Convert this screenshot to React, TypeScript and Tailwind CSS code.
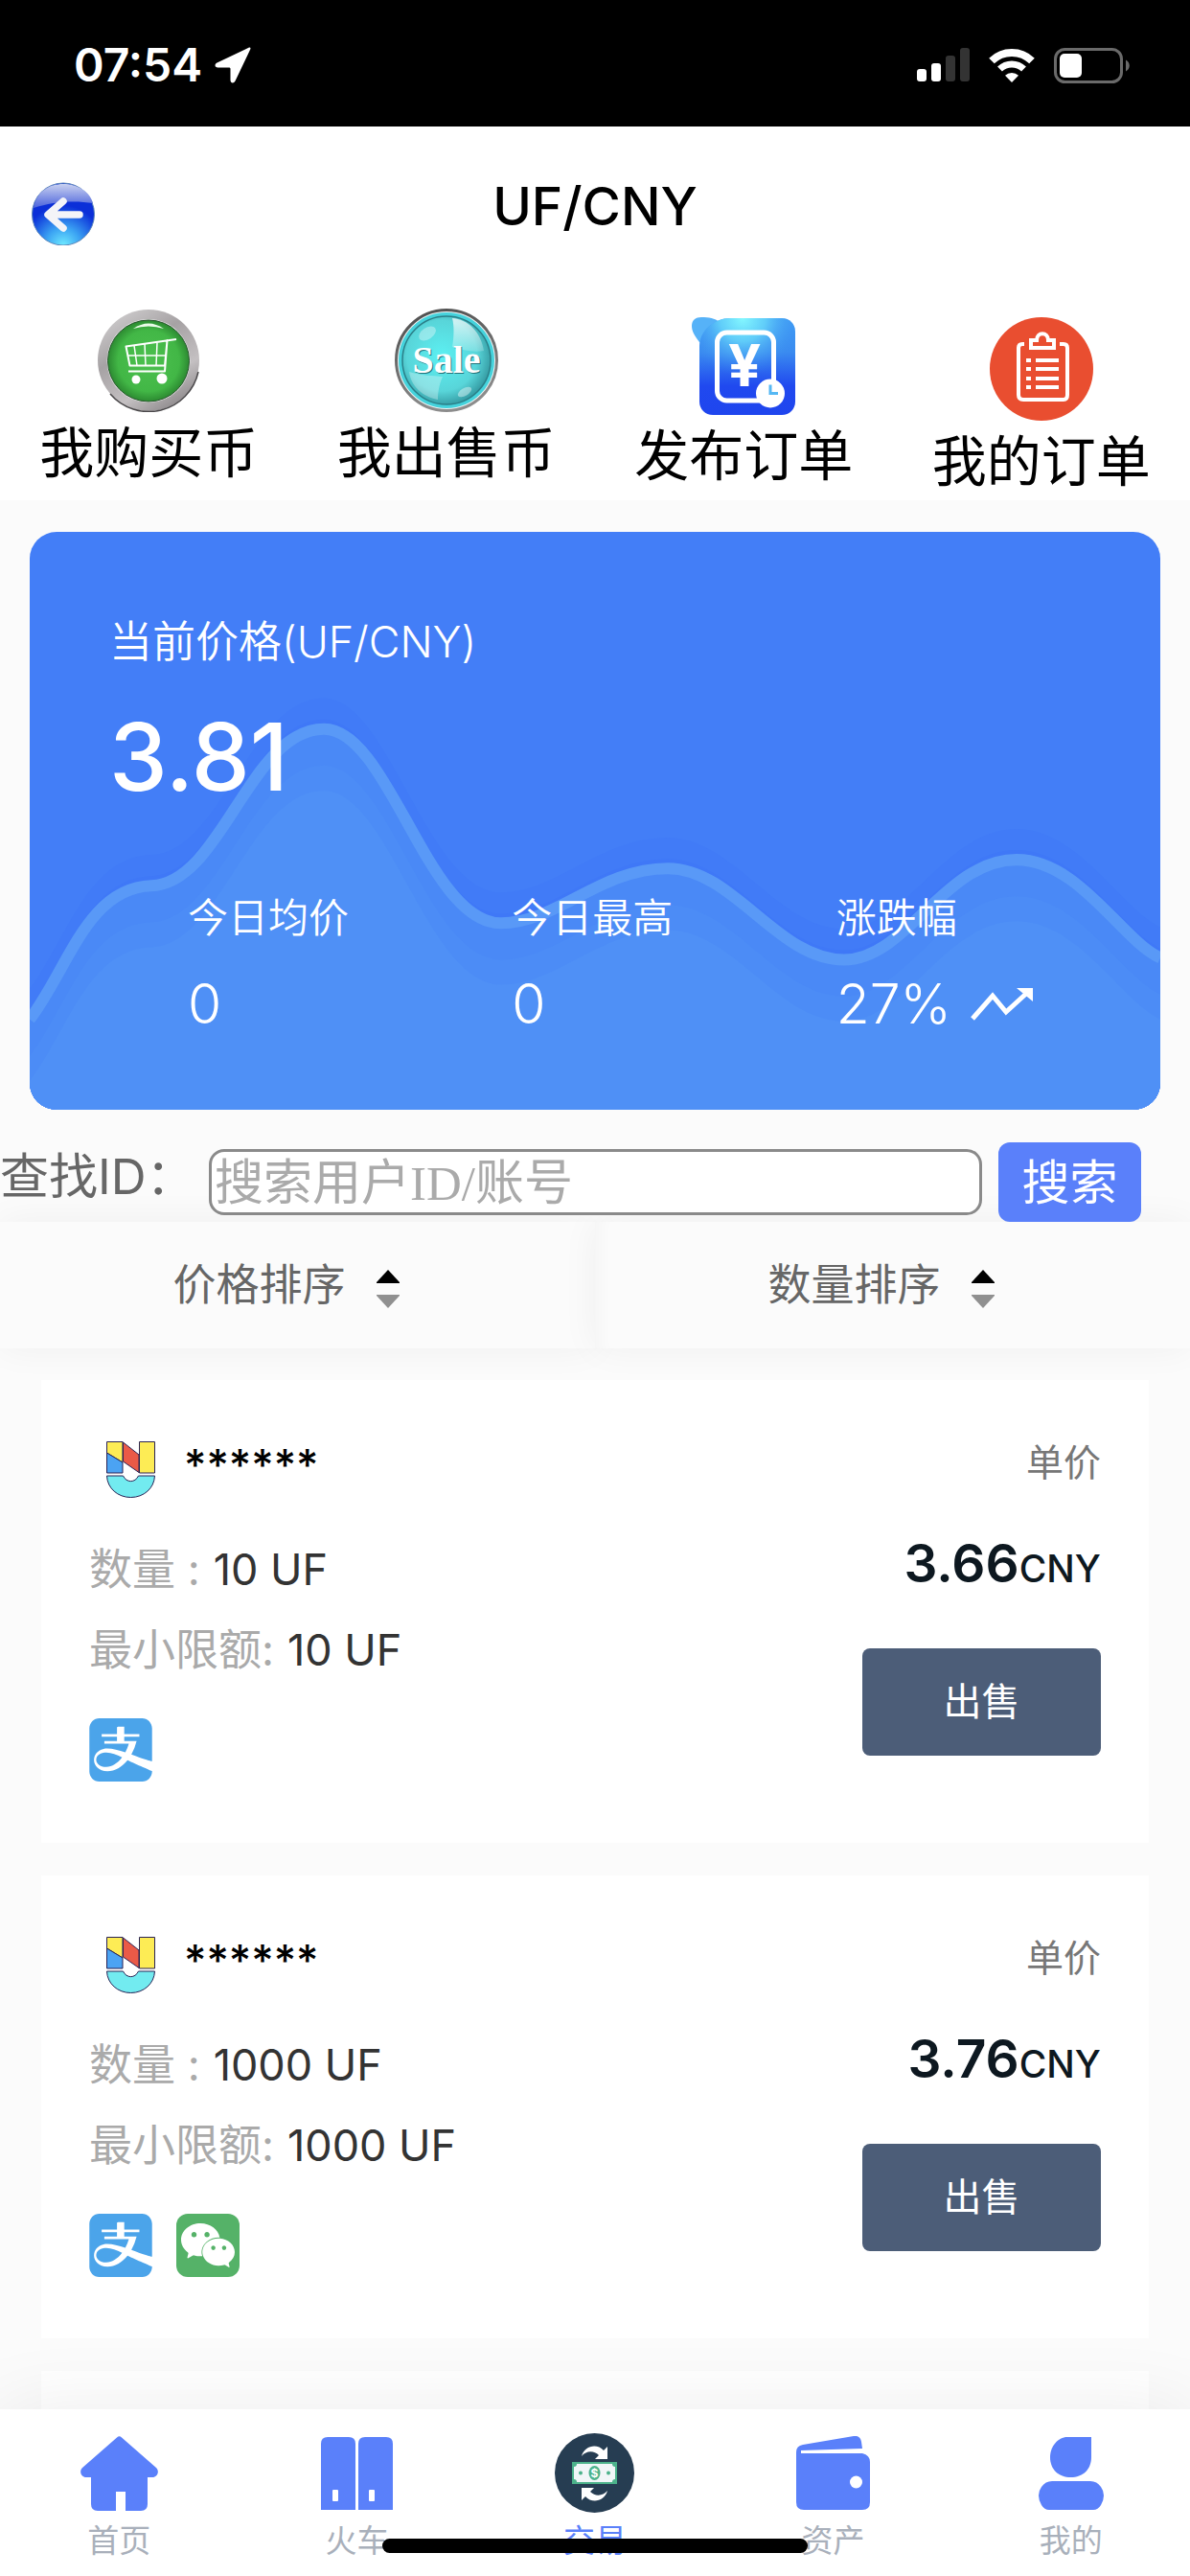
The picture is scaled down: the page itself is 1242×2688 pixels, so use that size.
import { useState } from "react";
import type { ReactNode } from "react";
import { SiAlipay, SiWechat } from "react-icons/si";

type PayMethod = "alipay" | "wechat";

type Order = {
  id: number;
  name: string;
  amount: string;
  limit: string;
  price: string;
  pay: PayMethod[];
};

const orders: Order[] = [
  { id: 1, name: "******", amount: "10 UF", limit: "10 UF", price: "3.66", pay: ["alipay"] },
  { id: 2, name: "******", amount: "1000 UF", limit: "1000 UF", price: "3.76", pay: ["alipay", "wechat"] },
];

const wave =
  "M0 507C40 455 60 370 127 368C200 366 230 205 307 205C375 205 415 407 492 407C550 407 595 350 666 350C735 350 780 445 850 445C915 445 955 341 1030 341C1095 341 1140 425 1180 443";

function StatusBar() {
  return (
    <div className="flex h-[132px] shrink-0 items-center justify-between bg-black pt-1 pr-[63px] pl-[77px] text-white">
      <div className="flex items-center gap-[13px]">
        <span className="text-[48px] leading-[60px] font-semibold">07:54</span>
        <svg width="38" height="38" viewBox="0 0 38 38" fill="#fff">
          <path d="M35.500 0.800L2.500 16.500C-0.500 18 0 21.500 3.500 21.500H15C16 21.500 16.500 22 16.500 23V34.500C16.500 38 20 38.500 21.500 35.500L37.200 2.500C38 1 37 0 35.500 0.800Z" />
        </svg>
      </div>
      <div className="flex items-center gap-5">
        <svg width="55" height="36" viewBox="0 0 55 36">
          <rect x="0" y="22" width="10" height="13" rx="3" fill="#fff" />
          <rect x="15" y="16" width="10" height="19" rx="3" fill="#fff" />
          <rect x="30" y="8" width="10" height="27" rx="3" fill="#333" />
          <rect x="45" y="0" width="10" height="35" rx="3" fill="#333" />
        </svg>
        <svg width="48" height="36" viewBox="0 0 48 36" fill="none" stroke="#fff">
          <path d="M3 13.500A30 30 0 0 1 45 13.500" strokeWidth="8" />
          <path d="M11.500 22A18 18 0 0 1 36.500 22" strokeWidth="7" />
          <path d="M24 36L17 28.800A10 10 0 0 1 31 28.800Z" fill="#fff" stroke="none" />
        </svg>
        <svg width="79" height="37" viewBox="0 0 79 37">
          <rect x="1.500" y="1.500" width="69" height="34" rx="10" fill="none" stroke="#6a6a6a" strokeWidth="3" />
          <rect x="6" y="6" width="23" height="25" rx="5" fill="#fff" />
          <path d="M75 12.500V24.500C80 22 80 15 75 12.500Z" fill="#6a6a6a" />
        </svg>
      </div>
    </div>
  );
}

function BackIcon() {
  return (
    <svg width="66" height="66" viewBox="0 0 66 66">
      <defs>
        <radialGradient id="backBody" cx="0.5" cy="1" r="0.8">
          <stop offset="0" stopColor="#6feaff" />
          <stop offset="0.35" stopColor="#3ba3f3" />
          <stop offset="0.8" stopColor="#0b2fd8" />
          <stop offset="1" stopColor="#0b2fd8" />
        </radialGradient>
        <linearGradient id="backShine" x1="0" y1="0" x2="0" y2="1">
          <stop offset="0" stopColor="#c9d1f0" />
          <stop offset="1" stopColor="#4a62dc" />
        </linearGradient>
      </defs>
      <circle cx="33" cy="33.500" r="32.500" fill="url(#backBody)" stroke="#5d86b8" strokeWidth="1" />
      <path d="M2 27C5 10 18 2 33 2C48 2 61 10 64 22C46 19 22 20 2 27Z" fill="url(#backShine)" />
      <path d="M33 20L17 34L33 48M18 34H50" fill="none" stroke="#f3f4f8" strokeWidth="7.500" strokeLinecap="round" strokeLinejoin="round" />
    </svg>
  );
}

function BuyIcon() {
  return (
    <svg width="108" height="108" viewBox="0 0 108 108">
      <defs>
        <linearGradient id="buyRing" x1="0.2" y1="0" x2="0.8" y2="1">
          <stop offset="0" stopColor="#cfcdce" />
          <stop offset="0.35" stopColor="#a6a2a4" />
          <stop offset="0.7" stopColor="#c4c0c2" />
          <stop offset="1" stopColor="#858183" />
        </linearGradient>
        <radialGradient id="buyGreen" cx="0.5" cy="0.5" r="0.5">
          <stop offset="0" stopColor="#4cc04f" />
          <stop offset="0.75" stopColor="#42b746" />
          <stop offset="1" stopColor="#2c8a31" />
        </radialGradient>
      </defs>
      <circle cx="54" cy="54" r="53" fill="url(#buyRing)" />
      <path d="M14 89A53 53 0 0 0 106 66" fill="none" stroke="#4a484a" strokeWidth="1.500" />
      <circle cx="54" cy="54.500" r="43.500" fill="#e8e6e8" />
      <circle cx="54" cy="54.500" r="42.500" fill="url(#buyGreen)" stroke="#25552a" strokeWidth="1" />
      <path d="M38 21Q54 10 70 21Q54 16 38 21Z" fill="#eafbe9" />
      <g fill="none" stroke="#fff" strokeWidth="2">
        <path d="M83 32L30.500 39.500L34.500 59.500H71L73.500 33L71 65.500H33" strokeLinejoin="round" />
        <path d="M32 49H72M39 38.500L42 59.500M50 37L51 59.500M63 35.500L62 59.500" strokeWidth="1.500" />
      </g>
      <circle cx="41" cy="74" r="4.500" fill="#fff" />
      <circle cx="68" cy="73" r="5.500" fill="#fff" />
    </svg>
  );
}

function SaleIcon() {
  return (
    <svg width="108" height="108" viewBox="0 0 108 108">
      <defs>
        <radialGradient id="saleBody" cx="0.45" cy="0.45" r="0.55">
          <stop offset="0" stopColor="#5cf0f2" />
          <stop offset="0.7" stopColor="#58d5d9" />
          <stop offset="1" stopColor="#349aa2" />
        </radialGradient>
        <linearGradient id="saleShine" x1="0" y1="0" x2="0" y2="1">
          <stop offset="0" stopColor="#ffffff" stopOpacity="0.75" />
          <stop offset="1" stopColor="#ffffff" stopOpacity="0.2" />
        </linearGradient>
        <linearGradient id="saleRing" x1="0" y1="0" x2="0.3" y2="1">
          <stop offset="0" stopColor="#4b4b4b" />
          <stop offset="1" stopColor="#8c8c8c" />
        </linearGradient>
      </defs>
      <circle cx="54" cy="54" r="52.500" fill="#f2f2f2" stroke="url(#saleRing)" strokeWidth="3" />
      <circle cx="54" cy="54" r="48" fill="url(#saleBody)" stroke="#45d3dc" strokeWidth="4" />
      <circle cx="54" cy="54" r="46" fill="none" stroke="#2b7f88" strokeWidth="1.500" />
      <path d="M60 40C62 28 62 18 60 10C76 11 90 24 93 44C82 46 70 43 60 40Z" fill="url(#saleShine)" />
      <path d="M15 66C28 70 40 70 50 71C46 80 45 88 45 95C29 92 17 81 15 66Z" fill="#fff" opacity="0.3" />
      <ellipse cx="34" cy="26" rx="10" ry="6" fill="#fff" opacity="0.35" transform="rotate(-35 34 26)" />
      <ellipse cx="73" cy="87" rx="8" ry="4" fill="#fff" opacity="0.4" transform="rotate(-30 73 87)" />
      <g fontSize="40" fontWeight="700" textAnchor="middle" className="font-['Liberation_Serif',serif]">
        <text x="55" y="68" fill="#22757c">Sale</text>
        <text x="54" y="67" fill="#fff">Sale</text>
      </g>
    </svg>
  );
}

function PublishIcon() {
  return (
    <svg width="108" height="102" viewBox="0 0 108 102">
      <defs>
        <linearGradient id="pubBody" x1="0" y1="0" x2="0" y2="1">
          <stop offset="0" stopColor="#3f9cf5" />
          <stop offset="0.35" stopColor="#3a8bf0" />
          <stop offset="0.7" stopColor="#2049ef" />
          <stop offset="1" stopColor="#1f45ee" />
        </linearGradient>
        <radialGradient id="pubGlow" cx="0.45" cy="0" r="0.6">
          <stop offset="0" stopColor="#84f8ff" />
          <stop offset="0.4" stopColor="#66d6fa" stopOpacity="0.85" />
          <stop offset="1" stopColor="#3a8bf0" stopOpacity="0" />
        </radialGradient>
      </defs>
      <path d="M8 26C2 18 0 14 0 9C0 3 4 0 10 0C18 0 24 1 29 5L20 30Z" fill="#56b2f8" />
      <path d="M8 30C8 14 24 1 40 1H94C102 1 108 7 108 15V88C108 96 102 102 94 102H22C14 102 8 96 8 88Z" fill="url(#pubBody)" />
      <path d="M8 30C8 14 24 1 40 1H94C102 1 108 7 108 15V88C108 96 102 102 94 102H22C14 102 8 96 8 88Z" fill="url(#pubGlow)" />
      <rect x="26.500" y="16" width="59" height="71" rx="10" fill="none" stroke="#fff" strokeWidth="5" />
      <text x="55" y="72" fontSize="60" fontWeight="700" textAnchor="middle" fill="#fff">¥</text>
      <circle cx="82" cy="79.500" r="15" fill="#fff" />
      <path d="M82 70.500V79.500H90" fill="none" stroke="#55b8f4" strokeWidth="3" />
    </svg>
  );
}

function OrdersIcon() {
  return (
    <svg width="108" height="108" viewBox="0 0 108 108">
      <circle cx="54" cy="54" r="54" fill="#e94e30" />
      <g fill="none" stroke="#fff" strokeWidth="4">
        <path d="M36 28H34Q30 28 30 32V81Q30 86 35 86H77Q81 86 81 81V32Q81 28 77 28H73" />
        <path d="M43 32V24H49C49 15 61 15 61 24H67V32Z" />
      </g>
      <g fill="#fff">
        {[43, 52, 62, 71].map((y) => (
          <g key={y}>
            <rect x="38" y={y} width="5" height="4" />
            <rect x="48" y={y} width="24" height="4" />
          </g>
        ))}
      </g>
    </svg>
  );
}

function CoinLogo() {
  return (
    <svg width="51" height="59" viewBox="0 0 51 59" stroke="#2a2355" strokeWidth="1">
      <path d="M0.500 0.500H17V22L0.500 12Z" fill="#fdec55" />
      <path d="M0.500 12L17 22V33H0.500Z" fill="#4ba3f3" />
      <path d="M17.500 1L34 14V32.500L17.500 21Z" fill="#ea5a47" />
      <path d="M34.500 0.500H50.500V33H34.500Z" fill="#fdec55" />
      <path d="M0.500 36H17.500C21 43.500 30 43.500 33.500 36H50.500C50 49 39 58.500 25.500 58.500C12 58.500 1 49 0.500 36Z" fill="#72ebf0" />
    </svg>
  );
}

function HomeIcon() {
  return (
    <svg width="81" height="78" viewBox="0 0 81 78" fill="#5a80fa">
      <path d="M38 1.500Q40.500 -1 43 1.500L79 33C83 37 80 43 75 43H70V71Q70 78 63 78H47V58H37V78H18Q11 78 11 71V43H6C1 43 -2 37 2 33Z" />
    </svg>
  );
}

function TrainIcon() {
  return (
    <svg width="75" height="76" viewBox="0 0 75 76">
      <path d="M0 76V7Q0 0 7 0H29Q36 0 36 7V76ZM39 76V7Q39 0 46 0H68Q75 0 75 7V76Z" fill="#5a80fa" />
      <rect x="12" y="55" width="6" height="12" rx="1" fill="#fff" />
      <rect x="50" y="55" width="6" height="12" rx="1" fill="#fff" />
    </svg>
  );
}

function TradeIcon() {
  return (
    <svg width="83" height="83" viewBox="0 0 83 83">
      <circle cx="41.500" cy="41.500" r="41.500" fill="#263d52" />
      <path d="M28 24C31 13 44 10 51 18L55 14V27H42L46 23C41 18 33 18 28 24Z" fill="#fff" />
      <path d="M55 60C52 71 39 74 32 66L28 70V57H41L37 61C42 66 50 66 55 60Z" fill="#fff" />
      <rect x="18" y="30" width="47" height="23" fill="#4cb28b" />
      <path d="M23 32H60Q60 35 63 35V48Q60 48 60 51H23Q23 48 20 48V35Q23 35 23 32Z" fill="#f1f6f8" />
      <ellipse cx="41.500" cy="41.500" rx="6" ry="7.500" fill="#4cb28b" />
      <circle cx="27" cy="41.500" r="2" fill="#4cb28b" />
      <circle cx="56" cy="41.500" r="2" fill="#4cb28b" />
      <text x="41.500" y="46" fontSize="12" fontWeight="700" textAnchor="middle" fill="#fff">$</text>
    </svg>
  );
}

function WalletIcon() {
  return (
    <svg width="77" height="77" viewBox="0 0 77 77">
      <path d="M0 17Q0 10 7 9L60 0Q67 -1 68 6L69 13L5 15V18H69Q77 20 77 27V69Q77 77 69 77H8Q0 77 0 69Z" fill="#5a80fa" />
      <circle cx="62.500" cy="48" r="6.500" fill="#fff" />
    </svg>
  );
}

function UserIcon() {
  return (
    <svg width="68" height="76" viewBox="0 0 68 76" fill="#5a80fa">
      <path d="M30 0H55V21C55 34 46 42 33.500 42C21 42 12 34 12 21C12 10 20 0 30 0Z" />
      <path d="M14 46H54Q61 46 65 52Q68 56 68 61Q68 66 65 71Q62 76 57 76H11Q6 76 3 71Q0 66 0 61Q0 56 3 52Q7 46 14 46Z" />
    </svg>
  );
}

const menus: { label: string; icon: ReactNode; low?: boolean }[] = [
  { label: "我购买币", icon: <BuyIcon /> },
  { label: "我出售币", icon: <SaleIcon /> },
  { label: "发布订单", icon: <PublishIcon />, low: true },
  { label: "我的订单", icon: <OrdersIcon />, low: true },
];

const tabs = [
  { label: "首页", icon: <HomeIcon /> },
  { label: "火车", icon: <TrainIcon /> },
  { label: "交易", icon: <TradeIcon /> },
  { label: "资产", icon: <WalletIcon /> },
  { label: "我的", icon: <UserIcon /> },
];

const stats = [
  { label: "今日均价", value: "0" },
  { label: "今日最高", value: "0" },
  { label: "涨跌幅", value: "27%", up: true },
];

function PriceCard() {
  return (
    <section className="relative mx-[31px] mt-[33px] overflow-hidden rounded-[28px] bg-[#437ef7] pt-[85px] pb-20 pl-[83px] text-white">
      <svg className="absolute inset-0 h-full w-full" viewBox="0 0 1180 601" preserveAspectRatio="none">
        <path d={`${wave}V633H0Z`} transform="translate(0 -32)" fill="#417bf7" />
        <path d={`${wave}V611H0Z`} transform="translate(0 -10)" fill="#3f78f7" />
        <path d={`${wave}V601H0Z`} fill="#4a89f6" />
        <path d={`${wave}V601H0Z`} transform="translate(0 38)" fill="#4c8cf6" />
        <path d={`${wave}V601H0Z`} transform="translate(0 64)" fill="#4f90f6" />
        <path d={wave} fill="none" stroke="#5999f7" strokeWidth="12" />
      </svg>
      <div className="relative">
        <h2 className="text-[45px] leading-[60px] font-[350]">当前价格(UF/CNY)</h2>
        <p className="mt-10 text-[97px] leading-[100px] font-medium">3.81</p>
        <dl className="mt-[94px] grid grid-cols-3 pl-[82px]">
          {stats.map((s) => (
            <div key={s.label} className="flex flex-col gap-9">
              <dt className="text-[42px] leading-[48px] font-[350]">{s.label}</dt>
              <dd className="flex items-center gap-5 text-[57px] leading-[60px] font-[350]">
                {s.value}
                {s.up && (
                  <svg width="66" height="36" viewBox="0 0 66 36" fill="none" stroke="#fff" strokeWidth="5">
                    <path d="M2 33L23 9L37 26L60 5" />
                    <path d="M48 1H65V15Z" fill="#fff" stroke="none" />
                  </svg>
                )}
              </dd>
            </div>
          ))}
        </dl>
      </div>
    </section>
  );
}

function SortButton({ label }: { label: string }) {
  return (
    <button className="flex h-[132px] items-center justify-center gap-8 bg-[#fbfbfb] pr-6 shadow-[0_0_36px_rgba(0,0,0,0.05)] last:shadow-[0_0_36px_rgba(0,0,0,0.05),inset_18px_0_18px_-14px_rgba(0,0,0,0.03)]">
      <span className="text-[45px] leading-[60px] text-[#666]">{label}</span>
      <svg width="24" height="40" viewBox="0 0 24 40" className="mt-2">
        <path d="M12 0L24 13V14H0V13Z" fill="#000" />
        <path d="M12 40L24 27V26H0V27Z" fill="#909090" />
      </svg>
    </button>
  );
}

function PayIcon({ type }: { type: PayMethod }) {
  if (type === "alipay") {
    return <SiAlipay className="size-[66px] text-[#4ba4ea]" title="支付宝" />;
  }
  return (
    <span className="flex size-[66px] items-center justify-center rounded-xl bg-[#55b268]">
      <SiWechat className="size-14 text-white" title="微信" />
    </span>
  );
}

function OrderCard({ order }: { order: Order }) {
  return (
    <li className="flex justify-between bg-white px-[50px] py-16">
      <div>
        <div className="flex gap-[30px] pl-[18px]">
          <CoinLogo />
          <span className="text-[45px] leading-[50px] font-medium text-black">{order.name}</span>
        </div>
        <dl className="mt-[33px] text-[45px] leading-[84px]">
          <div className="flex gap-[14px]">
            <dt className="text-[#aaa]">数量 :</dt>
            <dd className="text-[#333]">{order.amount}</dd>
          </div>
          <div className="flex gap-[14px]">
            <dt className="text-[#aaa]">最小限额:</dt>
            <dd className="text-[#333]">{order.limit}</dd>
          </div>
        </dl>
        <div className="mt-[29px] flex gap-[25px]">
          {order.pay.map((p) => (
            <PayIcon key={p} type={p} />
          ))}
        </div>
      </div>
      <div className="flex flex-col items-end">
        <span className="text-[39px] leading-[44px] text-[#777]">单价</span>
        <p className="mt-[53px] text-[55px] leading-[60px] font-semibold text-[#0d1820]">
          {order.price}
          <span className="text-[39px] font-medium">CNY</span>
        </p>
        <button className="mt-[53px] h-28 w-[249px] rounded-lg bg-[#4c5d78] text-[40px] text-white">出售</button>
      </div>
    </li>
  );
}

export default function App() {
  const [keyword, setKeyword] = useState("");
  const [tab, setTab] = useState("交易");

  return (
    <div className="flex h-screen flex-col overflow-hidden bg-[#fbfbfb] font-['Inter','Noto_Sans_CJK_SC',sans-serif]">
      <StatusBar />

      <header className="grid h-[172px] shrink-0 grid-cols-3 items-center bg-white px-[33px] pb-1.5">
        <button aria-label="返回" className="justify-self-start pt-4">
          <BackIcon />
        </button>
        <h1 className="text-center text-[55px] leading-[60px] font-medium text-black">UF/CNY</h1>
      </header>

      <nav className="grid shrink-0 grid-cols-4 items-start bg-white pt-[18px] pb-2">
        {menus.map((m) => (
          <a
            key={m.label}
            href="#"
            className={`flex flex-col items-center gap-[11px] text-[57px] leading-[64px] text-black ${m.low ? "pt-[9px]" : ""}`}
          >
            {m.icon}
            {m.label}
          </a>
        ))}
      </nav>

      <main className="flex-1 overflow-hidden">
        <PriceCard />

        <form className="relative z-10 mt-[34px] flex items-center pr-[51px]" onSubmit={(e) => e.preventDefault()}>
          <label htmlFor="search" className="w-[218px] self-start text-[51px] leading-[71px] whitespace-nowrap text-[#666]">
            查找ID：
          </label>
          <input
            id="search"
            value={keyword}
            onChange={(e) => setKeyword(e.target.value)}
            placeholder="搜索用户ID/账号"
            className="h-[69px] min-w-0 flex-1 rounded-2xl border-[3px] border-[#8a8a8a] bg-white px-[3px] pt-1 font-['Liberation_Serif','Noto_Sans_CJK_SC',serif] text-[51px] placeholder:text-[#aaa]"
          />
          <button className="ml-[17px] h-[83px] w-[149px] rounded-xl bg-[#5a80fa] text-[50px] leading-[60px] text-white">
            搜索
          </button>
        </form>

        <div className="grid grid-cols-2">
          <SortButton label="价格排序" />
          <SortButton label="数量排序" />
        </div>

        <ul className="relative mx-[43px] mt-[33px] flex flex-col gap-[34px]">
          {orders.map((o) => (
            <OrderCard key={o.id} order={o} />
          ))}
          <li className="h-24 bg-white" />
        </ul>
      </main>

      <footer className="relative z-10 shrink-0 bg-white shadow-[0_0_80px_rgba(0,0,0,0.08)]">
        <nav className="grid grid-cols-5 pt-[25px] pb-[17px]">
          {tabs.map((t) => (
            <button key={t.label} onClick={() => setTab(t.label)} className="flex flex-col items-center gap-[9px]">
              <span className="flex h-[83px] items-center">{t.icon}</span>
              <span className={`text-[33px] leading-[40px] ${tab === t.label ? "text-[#5a80fa]" : "text-[#a9b0bb]"}`}>
                {t.label}
              </span>
            </button>
          ))}
        </nav>
        {/* home indicator */}
        <div className="absolute bottom-6 left-1/2 h-[15px] w-[444px] -translate-x-1/2 rounded-full bg-black" />
      </footer>
    </div>
  );
}
